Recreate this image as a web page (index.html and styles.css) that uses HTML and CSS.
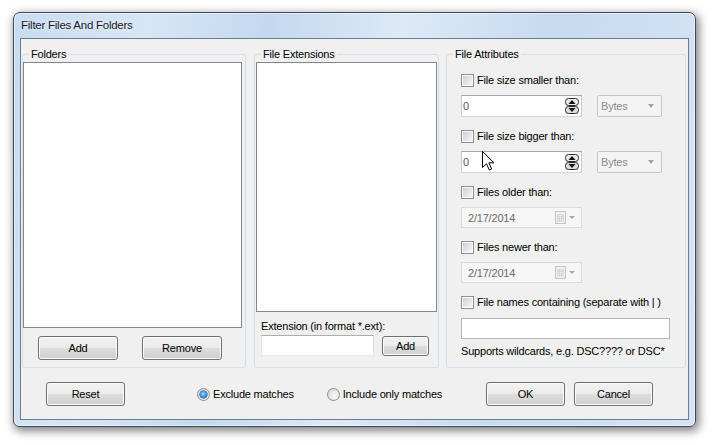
FILE: index.html
```html
<!DOCTYPE html>
<html lang="en">
<head>
	<meta charset="utf-8">
	<title>Filter Files And Folders</title>
	<link rel="stylesheet" href="styles.css">
</head>
<body>
	<div class="window">
		<div class="titlebar">Filter Files And Folders</div>
		<div class="client">
			<div class="groups">
				<fieldset class="group group_folders">
					<legend>Folders</legend>
					<div class="listbox folders_list"></div>
					<div class="folder_buttons">
						<button class="btn">Add</button>
						<button class="btn">Remove</button>
					</div>
				</fieldset>
				<fieldset class="group group_ext">
					<legend>File Extensions</legend>
					<div class="listbox ext_list"></div>
					<div class="ext_label">Extension (in format *.ext):</div>
					<div class="ext_row">
						<input type="text" class="textbox ext_input">
						<button class="btn btn_small">Add</button>
					</div>
				</fieldset>
				<fieldset class="group group_attrs">
					<legend>File Attributes</legend>
					<div class="attrs_body">
						<label class="check_row"><span class="check"></span>File size smaller than:</label>
						<div class="size_row">
							<div class="spin">
								<span class="spin_value">0</span>
								<svg class="spin_arrows" width="14" height="16" viewBox="0 0 14 16">
									<rect x="0.5" y="0.5" width="13" height="7" rx="3" fill="#e9e9e9" stroke="#2b2b2b"/>
									<rect x="0.5" y="8.5" width="13" height="7" rx="3" fill="#dcdcdc" stroke="#2b2b2b"/>
									<path d="M7 2 L10.5 6 L3.5 6 Z" fill="#111"/>
									<path d="M3.5 10 L10.5 10 L7 14 Z" fill="#111"/>
								</svg>
							</div>
							<div class="combo"><span>Bytes</span><span class="combo_arrow"></span></div>
						</div>
						<label class="check_row"><span class="check"></span>File size bigger than:</label>
						<div class="size_row">
							<div class="spin">
								<span class="spin_value">0</span>
								<svg class="spin_arrows" width="14" height="16" viewBox="0 0 14 16">
									<rect x="0.5" y="0.5" width="13" height="7" rx="3" fill="#e9e9e9" stroke="#2b2b2b"/>
									<rect x="0.5" y="8.5" width="13" height="7" rx="3" fill="#dcdcdc" stroke="#2b2b2b"/>
									<path d="M7 2 L10.5 6 L3.5 6 Z" fill="#111"/>
									<path d="M3.5 10 L10.5 10 L7 14 Z" fill="#111"/>
								</svg>
							</div>
							<div class="combo"><span>Bytes</span><span class="combo_arrow"></span></div>
						</div>
						<label class="check_row"><span class="check"></span>Files older than:</label>
						<div class="date">
							<span>2/17/2014</span>
							<svg class="cal" width="22" height="13" viewBox="0 0 22 13">
								<rect x="0.5" y="0.5" width="10" height="12" fill="#f2f2f2" stroke="#c4c4c4"/>
								<path d="M2.5 3 V11 M4.5 3 V11 M6.5 3 V11 M8.5 3 V11 M2 3.5 H9 M2 5.5 H9 M2 7.5 H9 M2 9.5 H9" stroke="#d6d6d6"/>
								<path d="M14 5 L20 5 L17 8 Z" fill="#a8a8a8"/>
							</svg>
						</div>
						<label class="check_row"><span class="check"></span>Files newer than:</label>
						<div class="date">
							<span>2/17/2014</span>
							<svg class="cal" width="22" height="13" viewBox="0 0 22 13">
								<rect x="0.5" y="0.5" width="10" height="12" fill="#f2f2f2" stroke="#c4c4c4"/>
								<path d="M2.5 3 V11 M4.5 3 V11 M6.5 3 V11 M8.5 3 V11 M2 3.5 H9 M2 5.5 H9 M2 7.5 H9 M2 9.5 H9" stroke="#d6d6d6"/>
								<path d="M14 5 L20 5 L17 8 Z" fill="#a8a8a8"/>
							</svg>
						</div>
						<label class="check_row"><span class="check"></span>File names containing (separate with | )</label>
						<input type="text" class="textbox names_input">
						<div class="hint">Supports wildcards, e.g. DSC???? or DSC*</div>
					</div>
				</fieldset>
			</div>
			<div class="footer">
				<button class="btn btn_reset">Reset</button>
				<label class="radio_row"><span class="radio radio_on"></span>Exclude matches</label>
				<label class="radio_row radio_second"><span class="radio"></span>Include only matches</label>
				<button class="btn btn_ok">OK</button>
				<button class="btn">Cancel</button>
			</div>
		</div>
	</div>
	<svg class="cursor" width="13" height="20" viewBox="0 0 13 20">
		<path d="M0.5 0.5 L0.5 16.5 L4.5 12.8 L7.3 19 L9.6 18 L6.9 11.8 L12 11.8 Z" fill="#fff" stroke="#000" stroke-linejoin="round"/>
	</svg>
</body>
</html>
```

FILE: styles.css
```css
body {
	margin: 0;
	width: 713px;
	height: 445px;
	overflow: hidden;
	background: #fff;
	font: 11px "Liberation Sans", Arial, sans-serif;
	letter-spacing: -0.2px;
	color: #000;
}
.window {
	margin: 12px 0 0 13px;
	width: 683px;
	height: 415px;
	box-sizing: border-box;
	padding: 0 6px 6px;
	border: 1px solid #3b4958;
	border-radius: 7px 7px 6px 6px;
	background: linear-gradient(100deg, #c7dbf1 0%, #d7e6f6 18%, #c3d8ef 34%, #dce9f7 52%, #c6daf0 72%, #d5e5f5 100%);
	box-shadow: 2px 3px 10px 1px rgba(0, 0, 0, 0.5), inset 0 0 0 1px rgba(255, 255, 255, 0.55);
}
.titlebar {
	height: 25px;
	line-height: 25px;
	padding-left: 1px;
	font-size: 11.5px;
	letter-spacing: -0.25px;
	color: #1a1a2a;
	text-shadow: 0 0 6px #fff;
}
.client {
	height: 382px;
	box-sizing: border-box;
	border: 1px solid #6d7b8b;
	background: #f0f0f0;
}
.groups {
	display: flex;
	margin: 9px 0 0 1px;
}
.group {
	margin: 0;
	padding: 0;
	min-width: 0;
	height: 320px;
	box-sizing: border-box;
	border: 1px solid #d5dfe5;
	border-radius: 3px;
}
.group legend {
	margin-left: 6px;
	padding: 0 2px;
	line-height: 13px;
}
.group_folders {
	width: 224px;
}
.group_ext {
	width: 185px;
	margin-left: 8px;
}
.group_attrs {
	width: 240px;
	margin-left: 7px;
}
.attrs_body {
	padding-left: 14px;
}
.listbox {
	box-sizing: border-box;
	border: 1px solid #828790;
	background: #fff;
}
.folders_list {
	margin-top: 1px;
	width: 219px;
	height: 266px;
}
.folder_buttons {
	display: flex;
	gap: 24px;
	margin: 8px 0 0 15px;
}
.btn {
	width: 79px;
	height: 24px;
	padding: 0;
	box-sizing: border-box;
	border: 1px solid #707070;
	border-radius: 3px;
	background: linear-gradient(#f2f2f2 0%, #ebebeb 48%, #dddddd 52%, #cfcfcf 100%);
	box-shadow: inset 0 0 0 1px #fbfbfb;
	font: 11px "Liberation Sans", Arial, sans-serif;
	letter-spacing: -0.2px;
	color: #000;
}
.folder_buttons .btn {
	width: 80px;
}
.ext_list {
	margin: 1px 0 0 1px;
	width: 181px;
	height: 250px;
}
.ext_label {
	margin: 8px 0 0 6px;
	line-height: 13px;
}
.ext_row {
	display: flex;
	align-items: flex-start;
	margin: 2px 0 0 6px;
}
.textbox {
	margin: 0;
	padding: 0 3px;
	box-sizing: border-box;
	height: 21px;
	border: 1px solid #abadb3;
	border-color: #abadb3 #dbdfe6 #e3e9ef #e2e3ea;
	background: #fff;
	font: 11px "Liberation Sans", Arial, sans-serif;
	outline: none;
}
.ext_input {
	width: 113px;
}
.btn_small {
	width: 47px;
	height: 20px;
	margin: 1px 0 0 8px;
}
.check_row {
	display: flex;
	align-items: center;
	gap: 3px;
	height: 13px;
	line-height: 13px;
	margin-top: 13px;
}
.check {
	width: 13px;
	height: 13px;
	box-sizing: border-box;
	padding: 1px;
	border: 1px solid #8e8f8f;
	background: linear-gradient(135deg, #cdd1d7, #f7f7f7) content-box, #fdfdfd;
}
.size_row {
	display: flex;
	gap: 15px;
	margin-top: 8px;
}
.spin {
	display: flex;
	align-items: center;
	width: 121px;
	height: 22px;
	box-sizing: border-box;
	padding: 0 2px 0 1px;
	border: 1px solid #a9adb4;
	border-color: #a2a7ae #c6cbd2 #cfd4da #c6cbd2;
	background: #fff;
}
.spin_value {
	color: #555;
}
.spin_arrows {
	margin-left: auto;
}
.combo {
	display: flex;
	align-items: center;
	width: 65px;
	height: 22px;
	box-sizing: border-box;
	padding: 0 7px 0 3px;
	border: 1px solid #c7c7c7;
	border-radius: 2px;
	background: #f4f4f4;
	color: #8a8a8a;
}
.combo_arrow {
	margin-left: auto;
	width: 0;
	height: 0;
	border-left: 3.5px solid transparent;
	border-right: 3.5px solid transparent;
	border-top: 4px solid #a4a4a4;
}
.date {
	display: flex;
	align-items: center;
	width: 121px;
	height: 21px;
	margin-top: 8px;
	box-sizing: border-box;
	padding: 0 4px 0 6px;
	border: 1px solid #dadada;
	background: #f6f6f6;
	color: #6d6d6d;
}
.cal {
	margin-left: auto;
}
.names_input {
	width: 209px;
	margin-top: 9px;
	border: 1px solid #b4b7bd;
}
.hint {
	margin-top: 6px;
	line-height: 13px;
}
.footer {
	display: flex;
	align-items: center;
	margin-top: 14px;
	padding: 0 35px 0 25px;
}
.btn_reset {
	margin-right: 72px;
}
.radio_row {
	display: flex;
	align-items: center;
	gap: 3px;
}
.radio_second {
	margin-left: 33px;
}
.radio {
	width: 13px;
	height: 13px;
	box-sizing: border-box;
	border: 1px solid #8e8f8f;
	border-radius: 50%;
	background: radial-gradient(circle at 60% 65%, #fafafa 0, #e2e2e2 60%, #cfcfcf 100%);
}
.radio_on::after {
	content: "";
	display: block;
	width: 7px;
	height: 7px;
	margin: 2px;
	border-radius: 50%;
	background: radial-gradient(circle at 45% 40%, #a8e4ff 0, #3c97e4 45%, #0f4a8c 100%);
	box-shadow: 0 0 0 0.5px #1d3f66;
}
.btn_ok {
	margin-left: auto;
	margin-right: 9px;
}
.cursor {
	position: absolute;
	left: 482px;
	top: 151px;
}
```
